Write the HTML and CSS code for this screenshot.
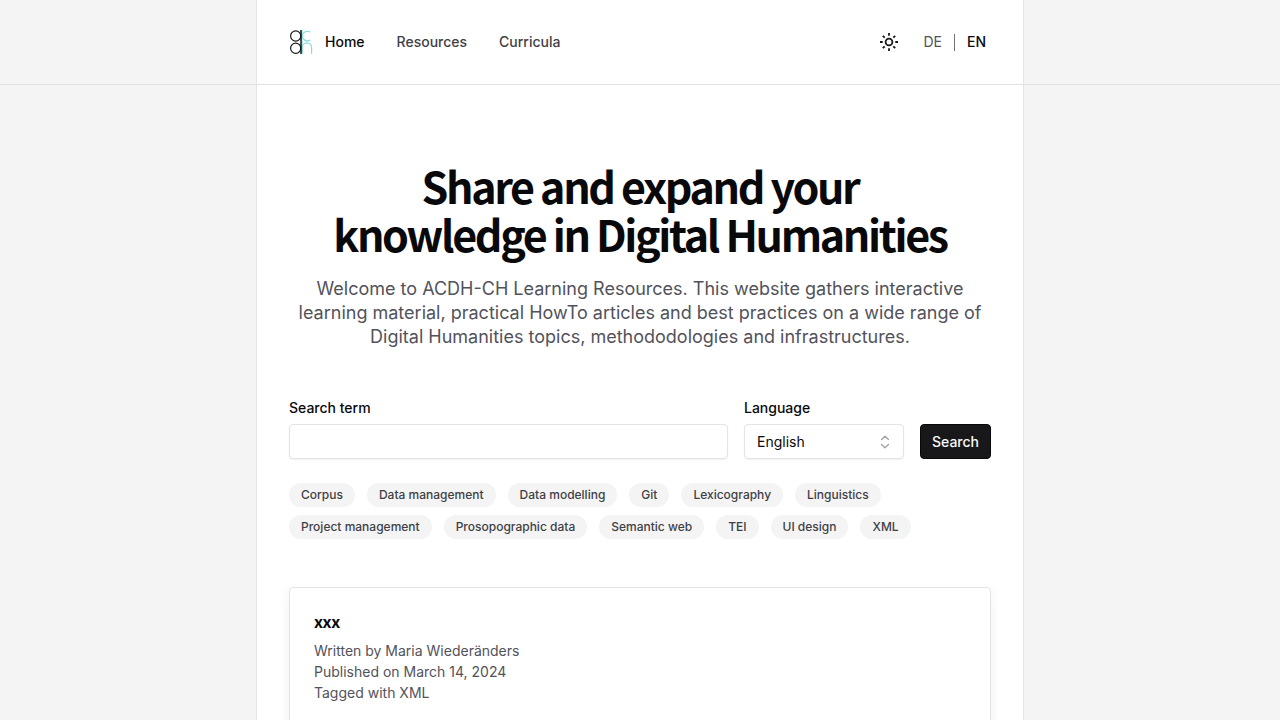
FILE: index.html
```html
<!DOCTYPE html>
<html lang="en">
<head>
<meta charset="utf-8">
<meta name="viewport" content="width=device-width, initial-scale=1">
<title>ACDH-CH Learning Resources</title>
<link rel="stylesheet" href="styles.css">
</head>
<body>
<div class="page">
  <header class="header">
    <div class="column header-inner">
      <nav class="nav" aria-label="Main">
        <a class="logo" href="#" aria-label="ACDH-CH">
          <svg width="24" height="26" viewBox="0 0 24 26" fill="none" stroke-width="1.2">
            <g stroke="#7fdcdc">
              <path d="M21.4 3.2A5.3 5.3 0 0 0 13.2 7a5.3 5.3 0 0 0 8.2 4"/>
              <path d="M13.2 24.8V18.6a4.7 4.7 0 0 1 9.4 0v6.2"/>
              <path d="M12.9 1v24"/>
            </g>
            <g stroke="#18181b">
              <circle cx="6.7" cy="7" r="5.1"/>
              <circle cx="6.7" cy="19.2" r="5.1"/>
              <path d="M12 1v24" stroke-width="1.5"/>
            </g>
          </svg>
        </a>
        <a class="nav-link current" href="#" aria-current="page">Home</a>
        <a class="nav-link" href="#">Resources</a>
        <a class="nav-link" href="#">Curricula</a>
      </nav>
      <div class="tools">
        <button class="theme" type="button" aria-label="Toggle colour scheme">
          <svg width="20" height="20" viewBox="0 0 20 20" fill="none" stroke="currentColor" stroke-width="1.8">
            <circle cx="10" cy="10" r="3.4"/>
            <path d="M10 1v2.7M10 16.3V19M1 10h2.7M16.3 10H19M3.8 3.8l1.9 1.9M14.3 14.3l1.9 1.9M3.8 16.2l1.9-1.9M14.3 5.7l1.9-1.9"/>
          </svg>
        </button>
        <div class="locales">
          <a class="locale" href="#">DE</a>
          <span class="divider"></span>
          <a class="locale current" href="#">EN</a>
        </div>
      </div>
    </div>
  </header>
  <main class="column main">
    <section class="hero">
      <h1 class="title">Share and expand your knowledge in Digital Humanities</h1>
      <p class="lead">Welcome to ACDH-CH Learning Resources. This website gathers interactive learning material, practical HowTo articles and best practices on a wide range of Digital Humanities topics, methododologies and infrastructures.</p>
    </section>
    <form class="search">
      <div class="field grow">
        <label class="label" for="term">Search term</label>
        <input class="control" id="term" type="text">
      </div>
      <div class="field">
        <label class="label" for="language">Language</label>
        <div class="select-wrap">
          <select class="control select" id="language"><option>English</option><option>German</option></select>
          <svg class="chevrons" width="16" height="16" viewBox="0 0 16 16" fill="none" stroke="#a1a1aa" stroke-width="1.3" stroke-linecap="round" stroke-linejoin="round"><path d="M4.5 5.5L8 2.2l3.5 3.3M4.5 10.5L8 13.8l3.5-3.3"/></svg>
        </div>
      </div>
      <button class="submit" type="submit">Search</button>
    </form>
    <ul class="tags">
      <li><a class="tag" href="#">Corpus</a></li>
      <li><a class="tag" href="#">Data management</a></li>
      <li><a class="tag" href="#">Data modelling</a></li>
      <li><a class="tag" href="#">Git</a></li>
      <li><a class="tag" href="#">Lexicography</a></li>
      <li><a class="tag" href="#">Linguistics</a></li>
      <li><a class="tag" href="#">Project management</a></li>
      <li><a class="tag" href="#">Prosopographic data</a></li>
      <li><a class="tag" href="#">Semantic web</a></li>
      <li><a class="tag" href="#">TEI</a></li>
      <li><a class="tag" href="#">UI design</a></li>
      <li><a class="tag" href="#">XML</a></li>
    </ul>
    <article class="card">
      <h2 class="card-title"><a href="#">xxx</a></h2>
      <p class="meta">Written by Maria Wiederänders</p>
      <p class="meta">Published on March 14, 2024</p>
      <p class="meta">Tagged with XML</p>
    </article>
  </main>
</div>
</body>
</html>
```
FILE: styles.css
```css
*, *::before, *::after { box-sizing: border-box; }
body {
  margin: 0;
  background: #f4f4f4;
  color: #09090b;
  font: 14px/21px Inter, "Liberation Sans", sans-serif;
}
h1, h2, p, ul { margin: 0; padding: 0; }
ul { list-style: none; }
a { color: inherit; text-decoration: none; }
svg { display: block; }

.page { display: flex; flex-direction: column; height: 100vh; overflow: hidden; }
.column {
  width: 100%;
  max-width: 768px;
  margin: 0 auto;
  padding: 0 32px;
  background: #fff;
  border: solid #e4e4e7;
  border-width: 0 1px;
}
.header { flex: none; border-bottom: 1px solid #e2e2e2; line-height: 20px; }
.header-inner { display: flex; justify-content: space-between; align-items: center; height: 84px; }
.nav { display: flex; align-items: center; gap: 32px; }
.logo { margin-right: -20px; }
.nav-link { font-weight: 500; color: #3f3f46; }
.nav-link.current, .locale.current { color: #09090b; font-weight: 500; }
.tools { display: flex; align-items: center; gap: 24px; }
.theme { padding: 0; border: 0; background: none; color: #18181b; }
.locales { display: flex; align-items: center; gap: 12px; padding-right: 5px; }
.locale { color: #52525b; }
.divider { width: 1px; height: 17px; background: #71717a; }

.main { flex: 1 0 auto; padding-top: 76px; }
.hero { text-align: center; }
.title {
  max-width: 640px;
  margin: 0 auto;
  font: 700 43px/48px "Noto Sans CJK SC", sans-serif;
  letter-spacing: -0.055em;
}
.lead { margin-top: 20px; font-size: 18px; line-height: 24px; color: #52525b; }

.search { display: flex; align-items: flex-end; gap: 16px; margin-top: 48px; }
.field { display: flex; flex-direction: column; gap: 6px; }
.grow { flex: 1; }
.label { font-weight: 500; }
.control {
  width: 100%;
  height: 35px;
  padding: 0 12px;
  border: 1px solid #e4e4e7;
  border-radius: 4px;
  background: #fff;
  color: #09090b;
  font: inherit;
  box-shadow: 0 1px 2px rgba(0, 0, 0, 0.06);
}
.select-wrap { position: relative; width: 160px; }
.select { display: block; appearance: none; }
.chevrons { position: absolute; right: 11px; top: 10px; pointer-events: none; }
.submit {
  height: 35px;
  padding: 0 11px;
  border: 1px solid #09090b;
  border-radius: 4px;
  background: #18181b;
  color: #fafafa;
  font: inherit;
  font-weight: 500;
}
.tags { display: flex; flex-wrap: wrap; gap: 8px 12px; margin-top: 24px; }
.tag {
  display: block;
  padding: 4px 12px;
  border-radius: 12px;
  background: #f4f4f4;
  color: #3f3f46;
  font-size: 12px;
  line-height: 16px;
  font-weight: 500;
}
.card {
  margin-top: 48px;
  padding: 24px;
  border: 1px solid #e4e4e7;
  border-radius: 4px;
  box-shadow: 0 4px 12px rgba(0, 0, 0, 0.06);
}
.card-title {
  margin-bottom: 10px;
  font: 700 16px/18px "Noto Sans CJK SC", sans-serif;
  letter-spacing: -0.025em;
}
.meta { color: #52525b; }
```
